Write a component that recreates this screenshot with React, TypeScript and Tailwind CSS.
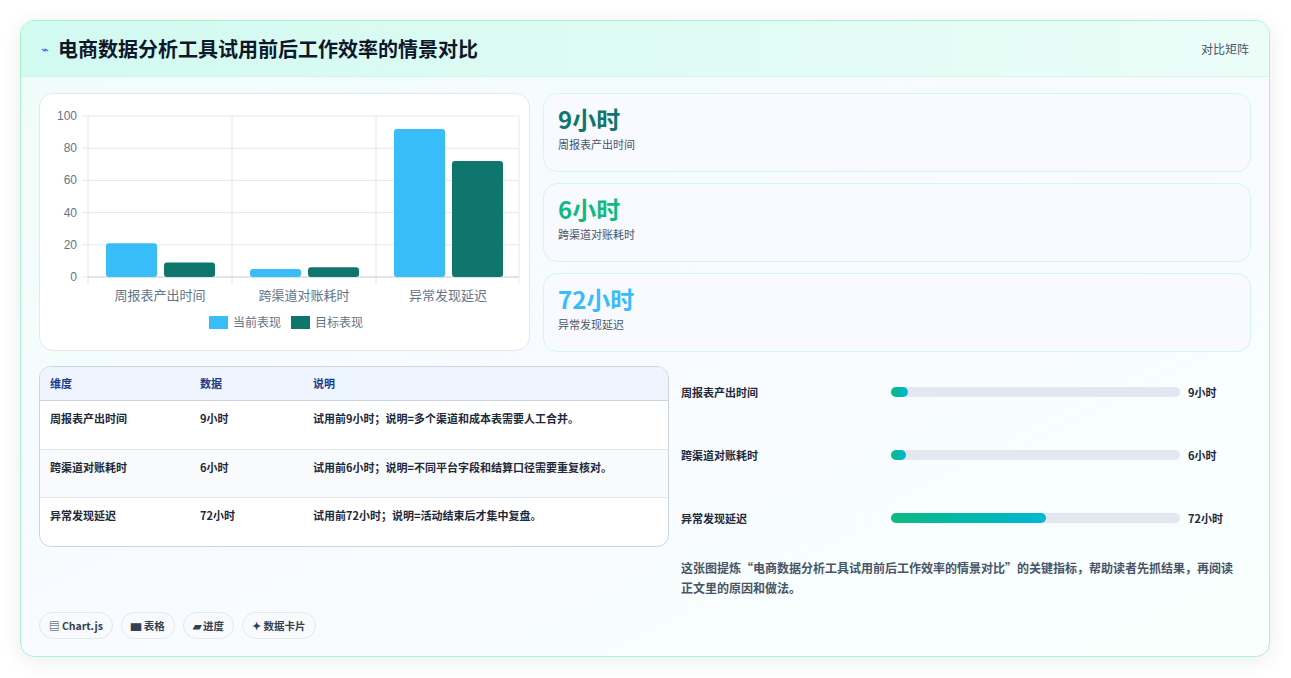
import React from "react";

const F = { fontFamily: '"Noto Sans CJK SC", "Noto Sans", sans-serif' };

function Chart() {
  const ys = [0, 20, 40, 60, 80, 100];
  const y = (v: number) => 183 - v * 1.61;
  const data = [
    ["周报表产出时间", 21, 9],
    ["跨渠道对账耗时", 5, 6],
    ["异常发现延迟", 92, 72],
  ] as const;
  return (
    <svg width="491" height="257" style={F}>
      {ys.map((v) => (
        <g key={v}>
          <line x1={42} x2={479} y1={y(v)} y2={y(v)} stroke="#e2e8f0" />
          <text x={37} y={y(v) + 4} textAnchor="end" fontSize="12" fill="#64748b" fontFamily="Liberation Sans, sans-serif">{v}</text>
        </g>
      ))}
      {[48, 192, 336, 479].map((x) => (
        <line key={x} x1={x} x2={x} y1={22} y2={190} stroke="#e2e8f0" />
      ))}
      <line x1={48} x2={479} y1={183} y2={183} stroke="#cbd5e1" />
      {data.map(([n, a, b], i) => (
        <g key={n}>
          <rect x={66 + i * 144} y={y(a)} width={51} height={a * 1.61} rx={3} fill="#38bdf8" />
          <rect x={124 + i * 144} y={y(b)} width={51} height={b * 1.61} rx={3} fill="#0f766e" />
          <text x={120 + i * 144} y={206} textAnchor="middle" fontSize="13" fill="#64748b">{n}</text>
        </g>
      ))}
      <rect x={169} y={222} width={19} height={13} fill="#38bdf8" />
      <text x={193} y={233} fontSize="12" fill="#64748b">当前表现</text>
      <rect x={251} y={222} width={19} height={13} fill="#0f766e" />
      <text x={275} y={233} fontSize="12" fill="#64748b">目标表现</text>
    </svg>
  );
}

const stats = [
  ["9小时", "周报表产出时间", "text-[#0f766e]"],
  ["6小时", "跨渠道对账耗时", "text-[#10b981]"],
  ["72小时", "异常发现延迟", "text-[#38bdf8]"],
];

const rows = [
  ["周报表产出时间", "9小时", "试用前9小时；说明=多个渠道和成本表需要人工合并。"],
  ["跨渠道对账耗时", "6小时", "试用前6小时；说明=不同平台字段和结算口径需要重复核对。"],
  ["异常发现延迟", "72小时", "试用前72小时；说明=活动结束后才集中复盘。"],
];

const prog = [
  ["周报表产出时间", "9小时", 17],
  ["跨渠道对账耗时", "6小时", 15],
  ["异常发现延迟", "72小时", 155],
] as const;

export default function App() {
  return (
    <div className="w-[1291px] h-[678px] bg-white pt-[20px] pl-[20px]" style={F}>
      <div className="w-[1250px] h-[637px] rounded-[14px] border border-[#a7f3d0] bg-gradient-to-br from-[#f0fdfa] via-[#f8fbff] to-[#f8fffd] shadow-[0_4px_20px_rgba(15,23,42,0.08)] overflow-hidden flex flex-col">
        <div className="h-[56px] flex items-center justify-between px-[20px] bg-gradient-to-r from-[#d1faf0] to-[#ecfdf8] border-b border-[#d1fae5]">
          <div className="flex items-center gap-[9px]">
            <span className="text-[#2563eb] text-[13px]">⌁</span>
            <span className="text-[20px] font-bold text-[#0f172a]">电商数据分析工具试用前后工作效率的情景对比</span>
          </div>
          <span className="text-[12px] text-[#475569]">对比矩阵</span>
        </div>
        <div className="px-[18px] pt-[16px] flex gap-[13px]">
          <div className="w-[491px] h-[258px] bg-white rounded-[14px] border border-[#e2e8f0]">
            <Chart />
          </div>
          <div className="flex-1 flex flex-col gap-[11px]">
            {stats.map(([v, l, c]) => (
              <div key={l} className="h-[79px] rounded-[14px] border border-[#d1fae5] bg-[#f8faff] px-[14px] pt-[9px]">
                <div className={`text-[24px] font-bold leading-[32px] ${c}`}>{v}</div>
                <div className="text-[11px] text-[#475569] mt-[1px]">{l}</div>
              </div>
            ))}
          </div>
        </div>
        <div className="px-[18px] pt-[14px] flex gap-[12px]">
          <div className="w-[630px]">
            <div className="h-[181px] rounded-[12px] border border-[#cbd5e1] bg-white overflow-hidden text-[11px] font-semibold text-[#1e293b]">
              <div className="h-[34px] flex items-center bg-[#eef5ff] border-b border-[#cbd5e1] text-[#1e3a8a]">
                <div className="w-[160px] pl-[10px]">维度</div>
                <div className="w-[113px]">数据</div>
                <div>说明</div>
              </div>
              {rows.map((r, i) => (
                <div key={r[0]} className={`h-[48.5px] flex items-start pt-[9px] ${i < 2 ? "border-b border-[#e2e8f0]" : ""} ${i === 1 ? "bg-[#f8fafc]" : ""}`}>
                  <div className="w-[160px] pl-[10px]">{r[0]}</div>
                  <div className="w-[113px]">{r[1]}</div>
                  <div>{r[2]}</div>
                </div>
              ))}
            </div>
            <div className="flex gap-[8px] mt-[65px] text-[10.5px] font-semibold text-[#334155]">
              {["▤ Chart.js", "▆ 表格", "▰ 进度", "✦ 数据卡片"].map((t) => (
                <span key={t} className="h-[27px] px-[9px] flex items-center rounded-full border border-[#e2e8f0] bg-[#f8fafc]">{t}</span>
              ))}
            </div>
          </div>
          <div className="flex-1 flex flex-col">
            <div className="flex flex-col gap-[45px] pt-[17px]">
              {prog.map(([l, v, w]) => (
                <div key={l} className="flex items-center h-[18px] text-[11px] font-semibold text-[#1e293b]">
                  <div className="w-[210px]">{l}</div>
                  <div className="w-[289px] h-[10px] rounded-full bg-[#e2e8f0]">
                    <div className="h-[10px] rounded-full bg-gradient-to-r from-[#10b981] to-[#06b6d4]" style={{ width: w }} />
                  </div>
                  <div className="ml-[8px]">{v}</div>
                </div>
              ))}
            </div>
            <p className="mt-[31px] pr-[8px] text-[12px] leading-[20px] font-semibold text-[#475569]">这张图提炼“电商数据分析工具试用前后工作效率的情景对比”的关键指标，帮助读者先抓结果，再阅读正文里的原因和做法。</p>
          </div>
        </div>
      </div>
    </div>
  );
}
